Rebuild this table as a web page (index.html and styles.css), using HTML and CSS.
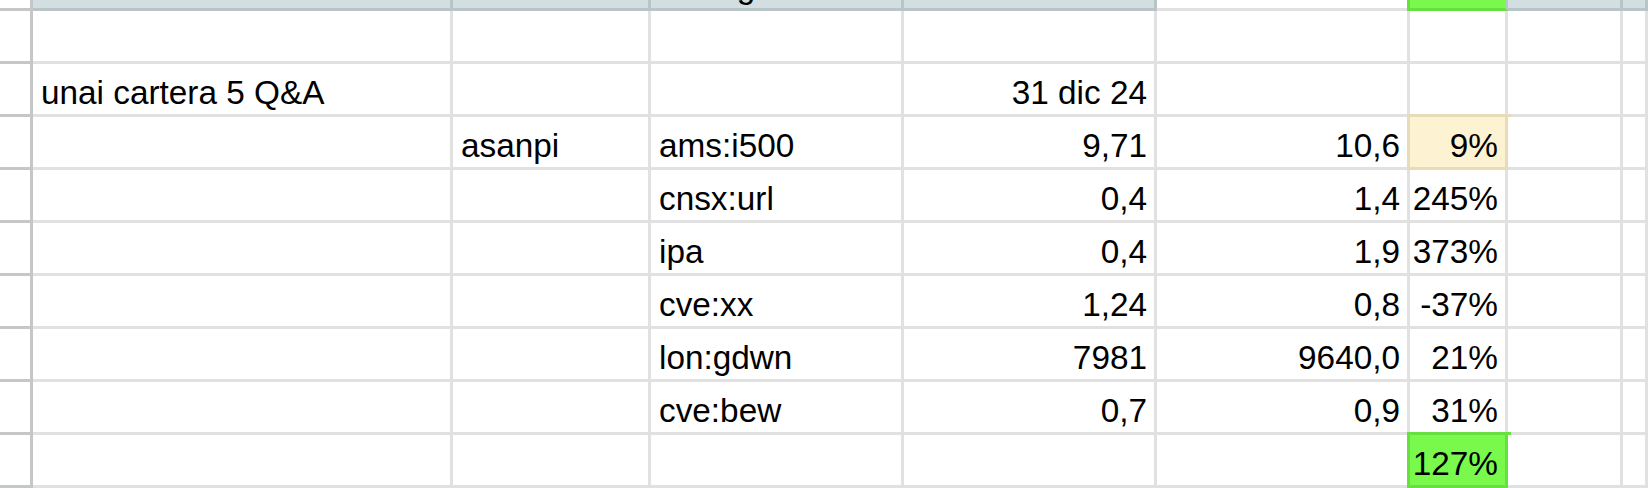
FILE: index.html
```html
<!DOCTYPE html>
<html lang="es">
<head>
<meta charset="utf-8">
<title>Hoja</title>
<link rel="stylesheet" href="styles.css">
</head>
<body>
<div class="sheet">
  <!-- partially visible top row -->
  <div class="c rh band-rh"></div>
  <div class="c band"></div>
  <div class="c band"></div>
  <div class="c band"><span class="cut">Listing</span></div>
  <div class="c band"></div>
  <div class="c band-white"></div>
  <div class="c band-green"></div>
  <div class="c band"></div>
  <div class="c band"></div>

  <!-- row 1 -->
  <div class="c rh"></div>
  <div class="c"></div><div class="c"></div><div class="c"></div><div class="c"></div><div class="c"></div><div class="c"></div><div class="c"></div><div class="c"></div>

  <!-- row 2 -->
  <div class="c rh"></div>
  <div class="c">unai cartera 5 Q&amp;A</div>
  <div class="c"></div>
  <div class="c"></div>
  <div class="c num">31 dic 24</div>
  <div class="c"></div><div class="c"></div><div class="c"></div><div class="c"></div>

  <!-- row 3 -->
  <div class="c rh"></div>
  <div class="c"></div>
  <div class="c">asanpi</div>
  <div class="c">ams:i500</div>
  <div class="c num">9,71</div>
  <div class="c num">10,6</div>
  <div class="c num hl-yellow">9%</div>
  <div class="c"></div><div class="c"></div>

  <!-- row 4 -->
  <div class="c rh"></div>
  <div class="c"></div><div class="c"></div>
  <div class="c">cnsx:url</div>
  <div class="c num">0,4</div>
  <div class="c num">1,4</div>
  <div class="c num">245%</div>
  <div class="c"></div><div class="c"></div>

  <!-- row 5 -->
  <div class="c rh"></div>
  <div class="c"></div><div class="c"></div>
  <div class="c">ipa</div>
  <div class="c num">0,4</div>
  <div class="c num">1,9</div>
  <div class="c num">373%</div>
  <div class="c"></div><div class="c"></div>

  <!-- row 6 -->
  <div class="c rh"></div>
  <div class="c"></div><div class="c"></div>
  <div class="c">cve:xx</div>
  <div class="c num">1,24</div>
  <div class="c num">0,8</div>
  <div class="c num">-37%</div>
  <div class="c"></div><div class="c"></div>

  <!-- row 7 -->
  <div class="c rh"></div>
  <div class="c"></div><div class="c"></div>
  <div class="c">lon:gdwn</div>
  <div class="c num">7981</div>
  <div class="c num">9640,0</div>
  <div class="c num">21%</div>
  <div class="c"></div><div class="c"></div>

  <!-- row 8 -->
  <div class="c rh"></div>
  <div class="c"></div><div class="c"></div>
  <div class="c">cve:bew</div>
  <div class="c num">0,7</div>
  <div class="c num">0,9</div>
  <div class="c num">31%</div>
  <div class="c"></div><div class="c"></div>

  <!-- row 9 -->
  <div class="c rh"></div>
  <div class="c"></div><div class="c"></div><div class="c"></div><div class="c"></div><div class="c"></div>
  <div class="c num hl-green">127%</div>
  <div class="c"></div><div class="c"></div>
</div>
</body>
</html>
```
FILE: styles.css
```css
html, body {
  margin: 0;
  padding: 0;
  background: #ffffff;
  overflow: hidden;
}

.sheet {
  display: grid;
  grid-template-columns: 33px 420px 198px 253px 253px 253px 98px 115px 1fr;
  grid-template-rows: 11px repeat(9, 53px);
  width: 1648px;
  height: 488px;
  overflow: hidden;
  font-family: "Liberation Sans", Arial, sans-serif;
  font-size: 33.33px;
  color: #000000;
}

.c {
  box-sizing: border-box;
  display: flex;
  align-items: flex-end;
  justify-content: flex-start;
  padding: 0 7px 2px 8px;
  border-right: 3px solid #e1e1e1;
  border-bottom: 3px solid #e1e1e1;
  background: #ffffff;
  white-space: nowrap;
  overflow: hidden;
  line-height: normal;
}

.num {
  justify-content: flex-end;
}

.rh {
  border-right-color: #c5c7c6;
  border-bottom-color: #c5c7c6;
}

.band {
  background: #d3dee2;
  border-right-color: #b7c5c6;
  border-bottom-color: #b7c5c6;
  padding-bottom: 2px;
}

.band-rh {
  border-right-color: #c5c7c6;
  border-bottom-color: #c5c7c6;
}

.band-white {
  background: #ffffff;
}

.band-green {
  background: #78f94c;
  border-right-color: #b7c5c6;
  border-bottom-color: #66df3f;
  box-shadow: -3px 0 0 0 #66df3f;
}

.cut {
  display: block;
}

.hl-yellow {
  background: #fdf2d1;
  border-right-color: #e6dcb7;
  border-bottom-color: #e6dcb7;
  box-shadow: 0 0 0 3px #e6dcb7;
}

.hl-green {
  background: #78f94c;
  border-right-color: #66df3f;
  border-bottom-color: #66df3f;
  box-shadow: 0 0 0 3px #66df3f;
}
```
